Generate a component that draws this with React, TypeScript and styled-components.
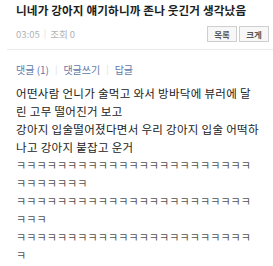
import React from "react";
import styled, { createGlobalStyle } from "styled-components";

const Global = createGlobalStyle`
  html, body { margin: 0; padding: 0; background: #ffffff; }
  body { font-family: "Noto Sans CJK KR", "Noto Sans", sans-serif; }
`;

const Page = styled.div`
  width: 273px;
  height: 266px;
  overflow: hidden;
  background: #ffffff;
`;

const Header = styled.header`
  padding: 0 4px 0 16px;
`;

const Title = styled.h1`
  margin: 0;
  height: 21px;
  font-size: 11.6px;
  line-height: 21px;
  font-weight: 700;
  color: #1c1c1c;
  letter-spacing: 0.15px;
  white-space: nowrap;
`;

const MetaRow = styled.div`
  display: flex;
  align-items: center;
  justify-content: space-between;
  height: 25px;
`;

const Meta = styled.div`
  display: flex;
  align-items: center;
  gap: 4px;
  font-size: 9.5px;
  color: #b2b2b2;
`;

const Pipe = styled.span<{ $color?: string }>`
  color: ${(p) => p.$color ?? "#dddddd"};
  font-size: 9px;
`;

const Buttons = styled.div`
  display: flex;
  gap: 2px;
`;

const SmallButton = styled.button`
  width: 30px;
  height: 16px;
  padding: 0;
  border: 1px solid #cfcfcf;
  background: #f7f7f7;
  color: #555555;
  font-family: inherit;
  font-size: 8.5px;
  line-height: 14px;
  font-weight: 700;
`;

const Divider = styled.hr`
  margin: 3px 0 0 7px;
  border: 0;
  border-top: 1px solid #ebebeb;
`;

const CommentBar = styled.nav`
  display: flex;
  align-items: center;
  gap: 6px;
  padding: 0 0 0 16px;
  height: 38px;
  font-size: 10px;
  color: #6078a8;
`;

const Body = styled.div`
  padding: 0 0 0 16px;
  margin-top: -4px;
`;

const Line = styled.p`
  margin: 0;
  height: 18px;
  line-height: 18px;
  font-size: 11.5px;
  color: #222222;
  letter-spacing: 0.3px;
  white-space: nowrap;
`;

const Laugh = styled(Line)`
  font-size: 11px;
  letter-spacing: 0.1px;
  color: #555555;
`;

const k = (n: number) => "ㅋ".repeat(n);

export default function App() {
  return (
    <Page>
      <Global />
      <Header>
        <Title>니네가 강아지 얘기하니까 존나 웃긴거 생각났음</Title>
        <MetaRow>
          <Meta>
            <span>03:05</span>
            <Pipe>|</Pipe>
            <span>조회 0</span>
          </Meta>
          <Buttons>
            <SmallButton>목록</SmallButton>
            <SmallButton>크게</SmallButton>
          </Buttons>
        </MetaRow>
      </Header>
      <Divider />
      <CommentBar>
        <span>댓글 (1)</span>
        <Pipe>|</Pipe>
        <span>댓글쓰기</span>
        <Pipe>|</Pipe>
        <span>답글</span>
      </CommentBar>
      <Body>
        <Line>어떤사람 언니가 술먹고 와서 방바닥에 뷰러에 달</Line>
        <Line>린 고무 떨어진거 보고</Line>
        <Line>강아지 입술떨어졌다면서 우리 강아지 입술 어떡하</Line>
        <Line>나고 강아지 붙잡고 운거</Line>
        <Laugh>{k(23)}</Laugh>
        <Laugh>{k(7)}</Laugh>
        <Laugh>{k(23)}</Laugh>
        <Laugh>{k(3)}</Laugh>
        <Laugh>{k(23)}</Laugh>
        <Laugh>{k(1)}</Laugh>
      </Body>
    </Page>
  );
}
